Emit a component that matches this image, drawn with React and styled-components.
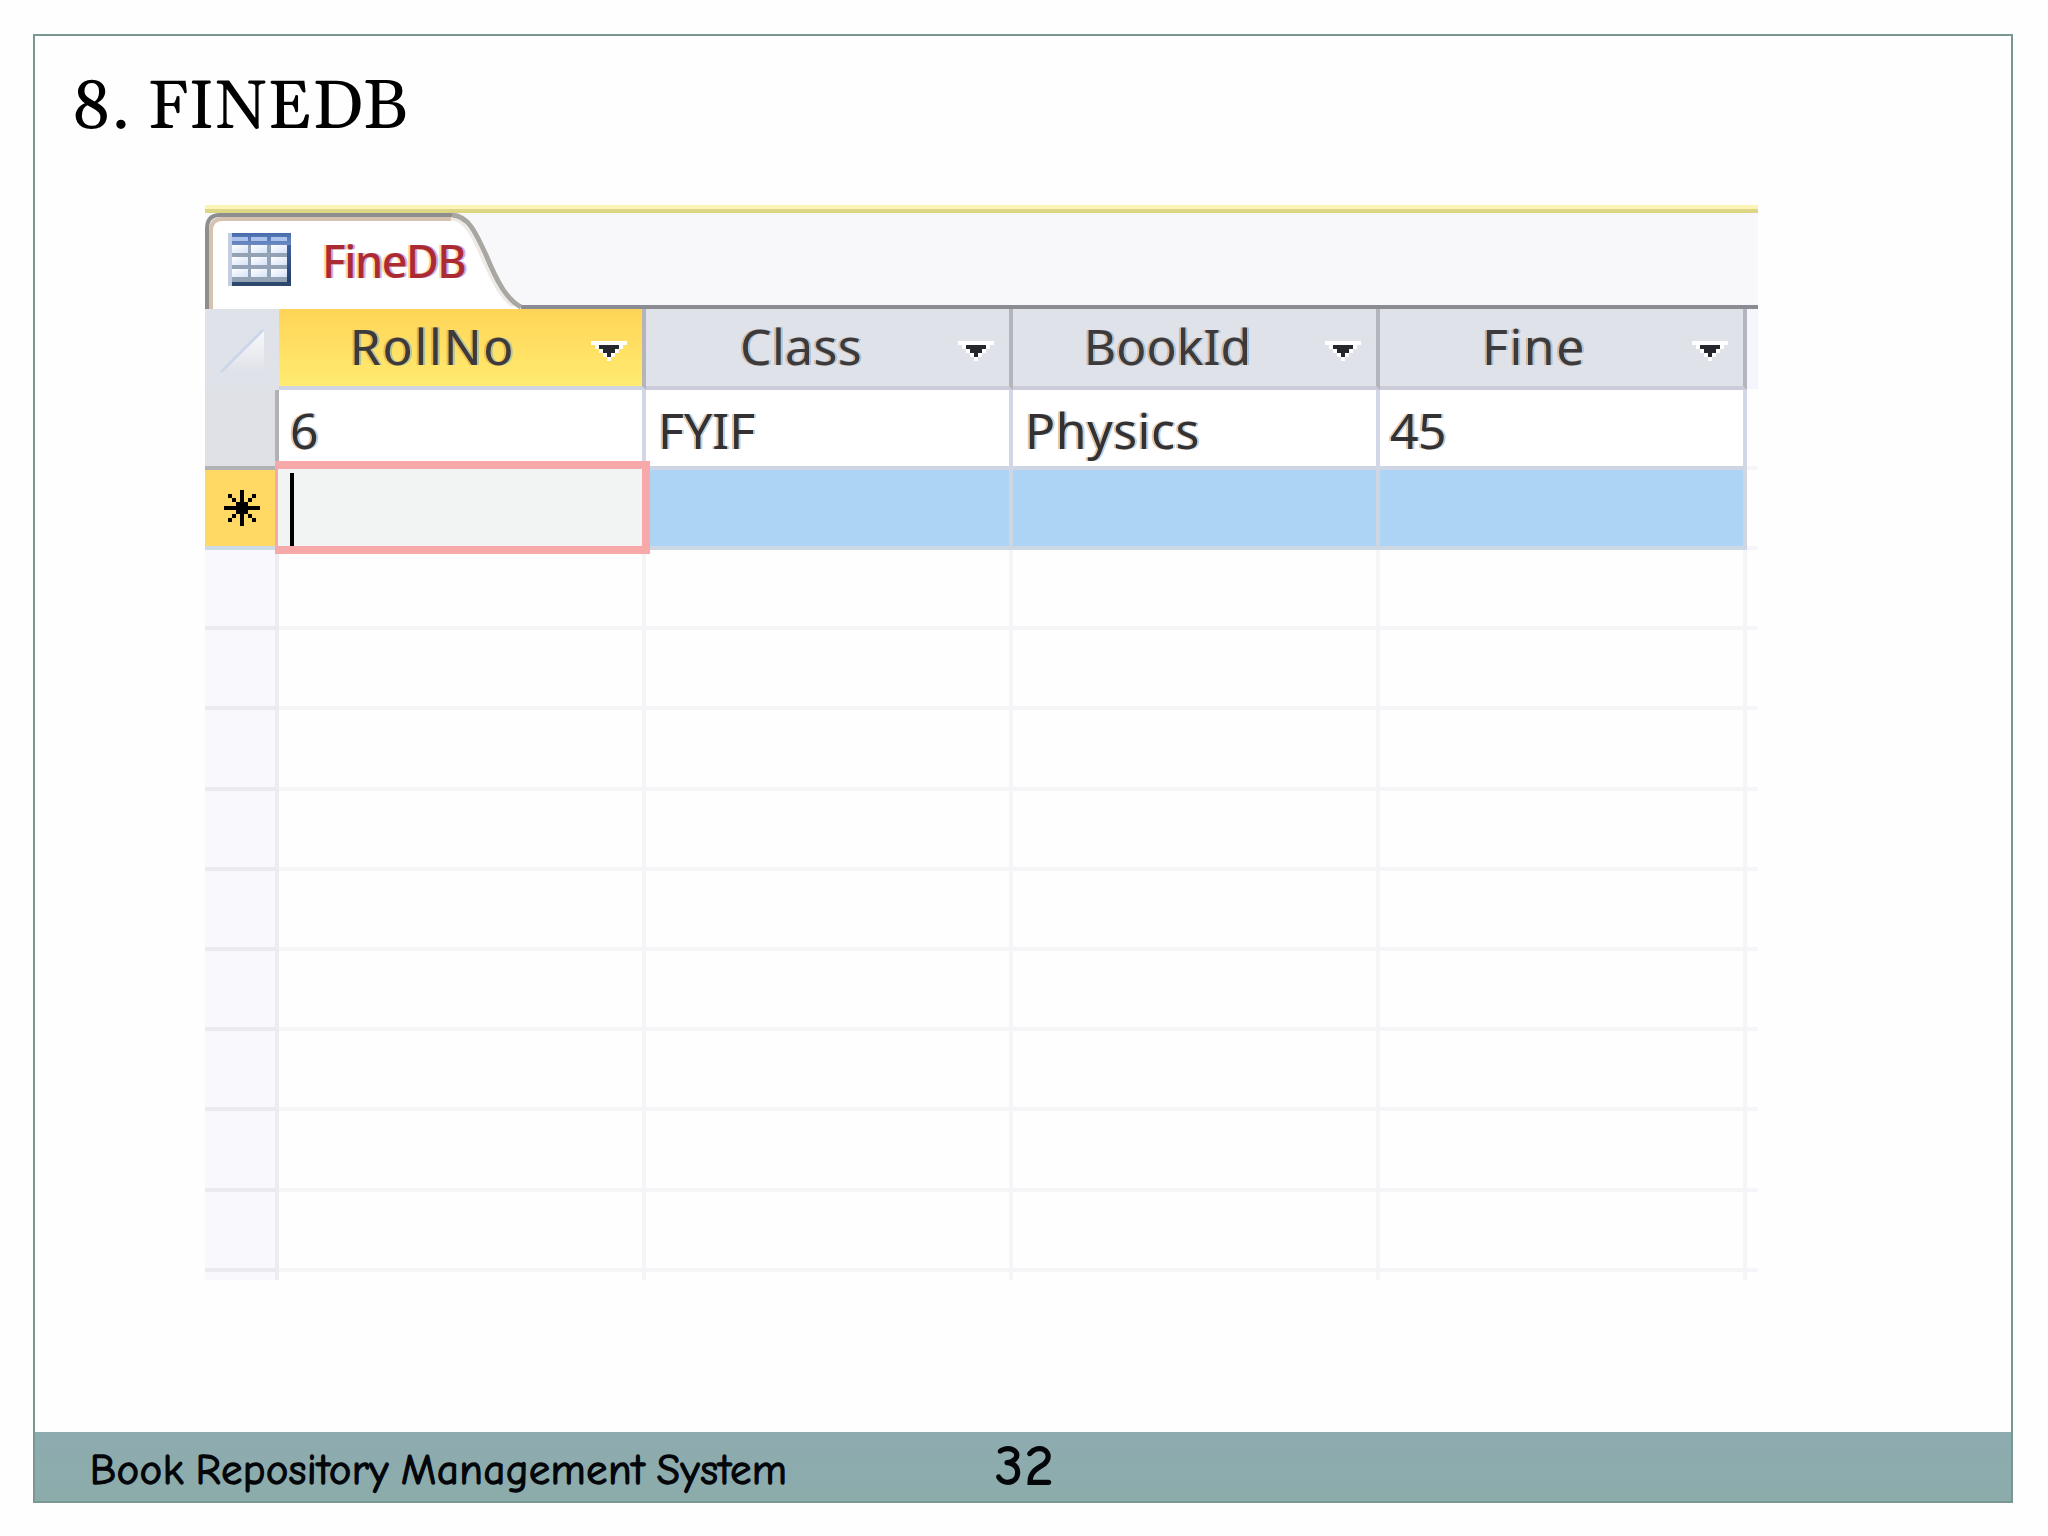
import styled, { createGlobalStyle } from "styled-components";

const GlobalStyle = createGlobalStyle`
  * {
    box-sizing: border-box;
  }
  body {
    margin: 0;
    background-color: #fefefe;
  }
`;

const Slide = styled.div`
  width: 2048px;
  height: 1536px;
  padding: 34px 35px 33px 33px;
  background-color: #fefefe;
`;

const Frame = styled.div`
  display: flex;
  flex-direction: column;
  height: 100%;
  border: 2px solid #7b9793;
`;

const Title = styled.h1`
  height: 169px;
  margin: 0;
  padding: 27px 0 0 36px;
  font-family: Georgia, Gelasio, "Liberation Serif", serif;
  font-size: 68px;
  font-weight: 400;
  line-height: 90px;
  letter-spacing: 0.3px;
  color: #000;
`;

const Sheet = styled.div`
  width: 1553px;
  margin-left: 170px;
  font-family: "Segoe UI", "Noto Sans", sans-serif;
`;

const TabStrip = styled.div`
  height: 104px;
  border-top: 4px solid #fcf3b8;
  border-bottom: 4px solid #8b8b93;
  background: linear-gradient(#ddd785 0 4px, #f8f7fa 4px);
`;

// outline and label share the same grid cell
const Tab = styled.div`
  display: grid;
  width: 320px;
  height: 100px;

  > * {
    grid-area: 1 / 1;
  }
`;

const TabLabel = styled.div`
  display: flex;
  align-items: flex-start;
  padding: 24px 0 0 23px;
`;

const TabName = styled.span`
  margin: 2px 0 0 31px;
  font-size: 45px;
  font-weight: 500;
  line-height: 52px;
  letter-spacing: -1.5px;
  color: #ab2b35;
  text-shadow: -2px 0 #ffd9a0, 2px 0 #c9b0e6;
`;

const Row = styled.div`
  display: grid;
  grid-template-columns: 74px repeat(4, 367px) 1fr;
  grid-template-rows: 100%;
  height: ${(props) => props.$height || 80}px;
`;

const HeaderCell = styled.div`
  display: flex;
  align-items: flex-start;
  border-right: 4px solid #b3b4bc;
  border-bottom: 4px solid ${(props) => (props.$active ? "#cfd4e2" : "#cbccda")};
  background: ${(props) =>
    props.$active ? "linear-gradient(#ffd457, #ffec70)" : "#e0e2ea"};
`;

const HeaderText = styled.span`
  width: 312px;
  padding: 3px ${(props) => props.$shift}px 0 0;
  text-align: center;
  font-size: 50px;
  line-height: 68px;
  letter-spacing: ${(props) => props.$spacing}px;
  color: #3c3a3c;
  text-shadow: -2px 0 rgba(214, 130, 40, 0.45), 2px 0 rgba(80, 160, 225, 0.45);
`;

const Arrow = styled.svg`
  width: 36px;
  height: 20px;
  margin-top: 32px;
`;

const SelectAll = styled.div`
  padding: 20px 0 0 14px;
  background-color: #dfe2e8;
`;

const HeaderEnd = styled.div`
  height: 80px;
  background-color: #f5f6fd;
`;

const RowSelector = styled.div`
  border-right: 4px solid #b0b2b8;
  border-bottom: 4px solid #b0b2b6;
  background-color: #dfe1e7;
`;

const NewSelector = styled.div`
  padding: 20px 0 0 19px;
  border-bottom: 4px solid #cdd9e6;
  background-color: #ffd963;
`;

const Cell = styled.div`
  padding: 6px 0 0 ${(props) => props.$indent}px;
  border-right: 4px solid #d1d7e7;
  border-bottom: 4px solid #ced6e6;
  font-size: 50px;
  line-height: 68px;
  letter-spacing: ${(props) => props.$spacing || 0}px;
  color: #333133;
  text-shadow: -2px 0 rgba(214, 130, 40, 0.45), 2px 0 rgba(80, 160, 225, 0.45);
  background-color: #fff;
`;

const NewCell = styled.div`
  position: relative;
  border-right: 4px solid #cfd6e2;
  border-bottom: 4px solid #ccd8e4;
  background-color: #aed4f5;
`;

// the focused cell's frame covers the neighbouring grid lines
const CellEditor = styled.div`
  position: absolute;
  z-index: 1;
  top: -9px;
  left: -4px;
  width: 375px;
  height: 93px;
  padding: 4px 0 0 12px;
  border: 8px solid #f7a8a9;
  border-left-width: 3px;
  background-color: #f2f4f4;
`;

const Caret = styled.div`
  width: 4px;
  height: 73px;
  background-color: #000;
`;

const EmptySelector = styled.div`
  border-right: 4px solid #ececf1;
  border-bottom: ${(props) => (props.$last ? 0 : 4)}px solid #ebeaf0;
  background-color: #f8f8fd;
`;

const EmptyCell = styled.div`
  border-right: 4px solid #f5f5f8;
  border-bottom: ${(props) => (props.$last ? 0 : 4)}px solid #f5f5f8;
`;

const RowEnd = styled.div`
  border-bottom: ${(props) => (props.$last ? 0 : 4)}px solid #f6f6fa;
`;

const Footer = styled.footer`
  display: flex;
  align-items: flex-start;
  height: 69px;
  margin-top: auto;
  padding-left: 55px;
  background: linear-gradient(#8eabaf, #8cacab);
  font-family: "Comic Sans MS", "Comic Neue", Lato, sans-serif;
  color: #04060a;
`;

const FooterText = styled.span`
  width: 905px;
  padding-top: 14px;
  font-size: 42px;
  line-height: 50px;
  letter-spacing: 0.8px;
  word-spacing: -3px;
  -webkit-text-stroke: 1.4px #04060a;
`;

const PageNumber = styled.span`
  padding-top: 2px;
  font-size: 55px;
  line-height: 64px;
  letter-spacing: 2px;
  -webkit-text-stroke: 1.8px #04060a;
`;

const columns = [
  { name: "RollNo", spacing: 1.7, shift: 5 },
  { name: "Class", spacing: 0.3, shift: 2 },
  { name: "BookId", spacing: 0, shift: 3 },
  { name: "Fine", spacing: 1.5, shift: 4 },
];
const record = [
  { value: "6", indent: 11 },
  { value: "FYIF", indent: 12 },
  { value: "Physics", indent: 12, spacing: 0.5 },
  { value: "45", indent: 10, spacing: -0.5 },
];
const emptyRows = [0, 1, 2, 3, 4, 5, 6, 7, 8];

const TabOutline = () => (
  <svg width="320" height="100" viewBox="0 0 320 100" fill="none">
    <path
      d="M2 100V20Q2 6 15 6H247C263 7 270 22 281 46C292 73 302 91 316 98V100Z"
      fill="#fff"
    />
    <path d="M6 100V22Q6 10 17 10H246" stroke="#d6c2b0" strokeWidth="4" />
    <path
      d="M246 10C260 11 267 25 277 48C288 74 297 90 308 97"
      stroke="#eeeae5"
      strokeWidth="3"
    />
    <path d="M2 100V20Q2 6 15 6H247" stroke="#8e8e8e" strokeWidth="4" />
    <path
      d="M247 6C263 7 270 22 281 46C292 73 302 91 316 98"
      stroke="#a9a7a1"
      strokeWidth="5"
    />
  </svg>
);

const TableIcon = () => (
  <svg width="63" height="53" viewBox="0 0 63 53" shapeRendering="crispEdges">
    <defs>
      <linearGradient id="iconTop" x1="0" y1="0" x2="0" y2="1">
        <stop offset="0" stopColor="#456cab" />
        <stop offset="1" stopColor="#6d8bc4" />
      </linearGradient>
      <linearGradient id="iconSide" x1="0" y1="0" x2="0" y2="1">
        <stop offset="0" stopColor="#3f62a0" />
        <stop offset="1" stopColor="#233b63" />
      </linearGradient>
      <linearGradient id="iconCell" x1="0" y1="0" x2="1" y2="1">
        <stop offset="0" stopColor="#fff" />
        <stop offset="1" stopColor="#d5e2f8" />
      </linearGradient>
    </defs>
    <rect width="63" height="53" fill="#93a2b4" />
    <rect width="63" height="12" fill="url(#iconTop)" />
    <rect x="59" y="12" width="4" height="41" fill="url(#iconSide)" />
    <rect x="4" y="49" width="59" height="4" fill="#2f486d" />
    <rect width="4" height="53" fill="#c3cde2" />
    {[4, 23, 43].map((x) => (
      <g key={x}>
        <rect x={x} y="4" width="16" height="4" fill="#abc2ea" />
        <rect x={x} y="12" width="16" height="8" fill="url(#iconCell)" />
        <rect x={x} y="24" width="16" height="8" fill="url(#iconCell)" />
        <rect x={x} y="36" width="16" height="8" fill="url(#iconCell)" />
      </g>
    ))}
  </svg>
);

const SelectAllIcon = () => (
  <svg width="46" height="46" viewBox="0 0 46 46">
    <defs>
      <linearGradient id="corner" x1="0" y1="0" x2="0" y2="1">
        <stop offset="0" stopColor="#f8f9fb" />
        <stop offset="1" stopColor="#dfe1e8" />
      </linearGradient>
    </defs>
    <path d="M3 44L45 2V44Z" fill="url(#corner)" />
    <path d="M2 43L44 1" stroke="#cbd6ea" strokeWidth="3" />
  </svg>
);

const DropArrow = () => (
  <Arrow viewBox="0 0 9 5" shapeRendering="crispEdges">
    <path d="M0 0H9V1H8V2H7V3H6V4H5V5H4V4H3V3H2V2H1V1H0Z" fill="#fff" />
    <path d="M2 1H7V2H6V3H5V4H4V3H3V2H2Z" fill="#24272e" />
  </Arrow>
);

const StarIcon = () => (
  <svg width="36" height="36" viewBox="0 0 9 9" shapeRendering="crispEdges">
    <path d="M4 0H5V9H4ZM0 4H9V5H0ZM3 3H6V6H3Z" />
    <path d="M1 1H2V2H1ZM2 2H3V3H2ZM6 2H7V3H6ZM7 1H8V2H7Z" />
    <path d="M1 7H2V8H1ZM2 6H3V7H2ZM6 6H7V7H6ZM7 7H8V8H7Z" />
  </svg>
);

const EmptyRow = ({ height, last }) => (
  <Row $height={height}>
    <EmptySelector $last={last} />
    {columns.map((column) => (
      <EmptyCell key={column.name} $last={last} />
    ))}
    <RowEnd $last={last} />
  </Row>
);

const App = () => {
  return (
    <Slide>
      <GlobalStyle />
      <Frame>
        <Title>8. FINEDB</Title>
        <Sheet>
          <TabStrip>
            <Tab>
              <TabOutline />
              <TabLabel>
                <TableIcon />
                <TabName>FineDB</TabName>
              </TabLabel>
            </Tab>
          </TabStrip>
          <Row $height={81}>
            <SelectAll>
              <SelectAllIcon />
            </SelectAll>
            {columns.map((column, index) => (
              <HeaderCell key={column.name} $active={index === 0}>
                <HeaderText $spacing={column.spacing} $shift={column.shift}>
                  {column.name}
                </HeaderText>
                <DropArrow />
              </HeaderCell>
            ))}
            <HeaderEnd />
          </Row>
          <Row>
            <RowSelector />
            {record.map((item) => (
              <Cell
                key={item.value}
                $indent={item.indent}
                $spacing={item.spacing}
              >
                {item.value}
              </Cell>
            ))}
            <RowEnd />
          </Row>
          <Row>
            <NewSelector>
              <StarIcon />
            </NewSelector>
            {columns.map((column, index) => (
              <NewCell key={column.name}>
                {index === 0 && (
                  <CellEditor>
                    <Caret />
                  </CellEditor>
                )}
              </NewCell>
            ))}
            <RowEnd />
          </Row>
          {emptyRows.map((row) => (
            <EmptyRow key={row} height={80.2} />
          ))}
          <EmptyRow height={8} last />
        </Sheet>
        <Footer>
          <FooterText>Book Repository Management System</FooterText>
          <PageNumber>32</PageNumber>
        </Footer>
      </Frame>
    </Slide>
  );
};

export default App;
